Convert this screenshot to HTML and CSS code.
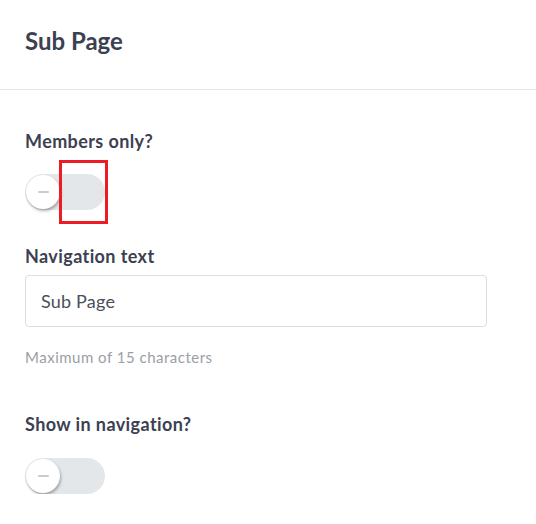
FILE: index.html
```html
<!DOCTYPE html>
<html>
<head>
<meta charset="utf-8">
<link rel="stylesheet" href="styles.css">
</head>
<body>
<header class="header">
  <h1 class="title">Sub Page</h1>
</header>
<main class="form">
  <div class="field">
    <label class="label">Members only?</label>
    <div class="toggle-wrap toggle-first">
      <div class="toggle"><span class="knob"><span class="minus"></span></span></div>
      <div class="highlight"></div>
    </div>
  </div>
  <div class="field field-nav">
    <label class="label">Navigation text</label>
    <div class="input">Sub Page</div>
    <p class="hint">Maximum of 15 characters</p>
  </div>
  <div class="field field-show">
    <label class="label">Show in navigation?</label>
    <div class="toggle-wrap toggle-second">
      <div class="toggle"><span class="knob"><span class="minus"></span></span></div>
    </div>
  </div>
</main>
</body>
</html>
```
FILE: styles.css
```css
html, body {
  margin: 0;
  padding: 0;
  background: #fff;
  font-family: Lato, "Open Sans", sans-serif;
  color: #3b4151;
}
.header {
  height: 90px;
  border-bottom: 1px solid #e3e5e8;
  padding: 26px 25px 0;
  box-sizing: border-box;
}
.title {
  margin: 0;
  font-size: 24px;
  line-height: 29px;
  font-weight: 700;
  color: #3b4151;
}
.form {
  padding: 40px 25px 0;
}
.field {
  display: flex;
  flex-direction: column;
  align-items: flex-start;
}
.field-nav {
  margin-top: 35px;
}
.field-show {
  margin-top: 47px;
}
.label {
  font-size: 18px;
  line-height: 22px;
  font-weight: 700;
  letter-spacing: 0.4px;
  color: #3b4151;
}
.toggle-wrap {
  position: relative;
  width: 80px;
  height: 36px;
}
.toggle-first {
  margin-top: 22px;
}
.toggle-second {
  margin-top: 23px;
}
.toggle {
  width: 80px;
  height: 36px;
  border-radius: 18px;
  background: #e4e7ea;
  display: flex;
  align-items: center;
}
.knob {
  width: 34px;
  height: 34px;
  border-radius: 50%;
  background: #fff;
  box-shadow: 1px 2px 3px rgba(0,0,0,0.3);
  margin-left: 1px;
  display: flex;
  align-items: center;
  justify-content: center;
}
.minus {
  width: 11px;
  height: 2px;
  background: #c8ccd1;
  border-radius: 1px;
}
.highlight {
  position: absolute;
  left: 34px;
  top: -14px;
  width: 43px;
  height: 58px;
  border: 3px solid #ed1c24;
}
.input {
  margin-top: 8px;
  height: 52px;
  box-sizing: border-box;
  border: 1px solid #dcdde0;
  border-radius: 4px;
  width: 462px;
  padding: 0 15px;
  display: flex;
  align-items: center;
  font-size: 18px;
  letter-spacing: 0.2px;
  color: #4a4f59;
}
.hint {
  margin: 22px 0 0;
  font-size: 15px;
  line-height: 17px;
  letter-spacing: 0.5px;
  color: #9a9ea5;
}
```
